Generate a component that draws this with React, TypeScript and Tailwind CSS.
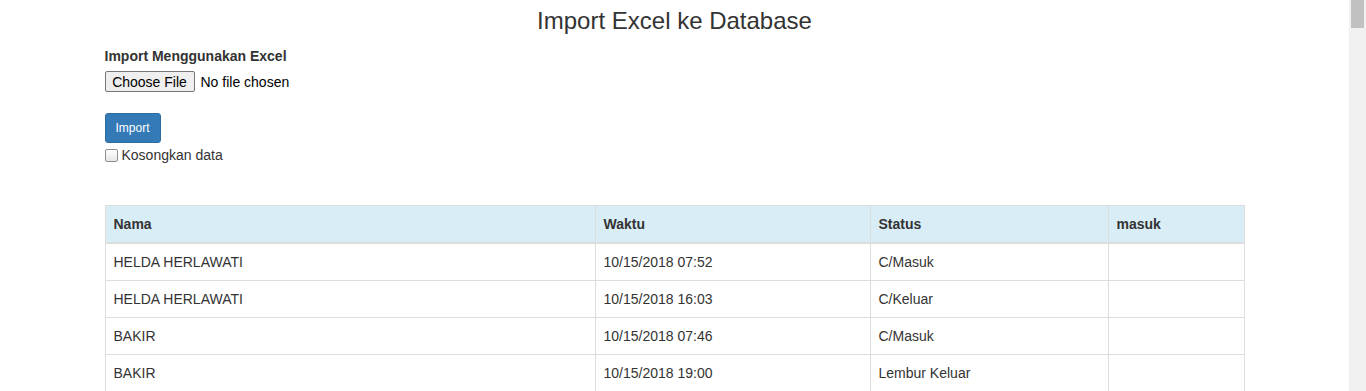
import React from "react";

const rows: [string, string, string, string][] = [
  ["HELDA HERLAWATI", "10/15/2018 07:52", "C/Masuk", ""],
  ["HELDA HERLAWATI", "10/15/2018 16:03", "C/Keluar", ""],
  ["BAKIR", "10/15/2018 07:46", "C/Masuk", ""],
  ["BAKIR", "10/15/2018 19:00", "Lembur Keluar", ""],
];

export default function App() {
  return (
    <div
      className="flex h-[391px] w-[1366px] overflow-hidden bg-white text-[14px] leading-[20px] text-[#333]"
      style={{ fontFamily: '"Liberation Sans", Arial, sans-serif' }}
    >
      <div className="flex-1 overflow-hidden">
        <div className="mx-auto w-[1170px] px-[15px]">
          <h3 className="mt-[8px] text-center text-[24px] leading-[26.4px] font-normal">
            Import Excel ke Database
          </h3>
          <div className="mt-[12px] font-bold">Import Menggunakan Excel</div>
          <div className="mt-[5px] flex h-[21px] items-center">
            <span className="flex h-[21px] w-[90px] items-center justify-center rounded-[2px] border border-[#767676] bg-[#efefef] text-[14px] text-black">
              Choose File
            </span>
            <span className="ml-[6px] text-black">No file chosen</span>
          </div>
          <div className="mt-[21px]">
            <span className="inline-flex h-[30px] w-[56px] items-center justify-center rounded-[3px] border border-[#2e6da4] bg-[#337ab7] text-[12px] leading-[18px] text-white">
              Import
            </span>
          </div>
          <div className="mt-[2px] flex h-[20px] items-center">
            <span className="mr-[4px] h-[13px] w-[13px] rounded-[2px] border border-[#8f8f8f] bg-gradient-to-b from-white to-[#e6e6e6]" />
            <span>Kosongkan data</span>
          </div>
          <table className="mt-[40px] w-[1139px] table-fixed border-collapse border border-[#ddd]">
            <colgroup>
              <col className="w-[490px]" />
              <col className="w-[275px]" />
              <col className="w-[238px]" />
              <col className="w-[136px]" />
            </colgroup>
            <thead>
              <tr className="bg-[#d9edf7]">
                <th className="border border-b-2 border-[#ddd] p-[8px] text-left font-bold">Nama</th>
                <th className="border border-b-2 border-[#ddd] p-[8px] text-left font-bold">Waktu</th>
                <th className="border border-b-2 border-[#ddd] p-[8px] text-left font-bold">Status</th>
                <th className="border border-b-2 border-[#ddd] p-[8px] text-left font-bold">masuk</th>
              </tr>
            </thead>
            <tbody>
              {rows.map((r, i) => (
                <tr key={i}>
                  {r.map((c, j) => (
                    <td key={j} className="h-[37px] border border-[#ddd] p-[8px]">
                      {c}
                    </td>
                  ))}
                </tr>
              ))}
            </tbody>
          </table>
        </div>
      </div>
      <div className="flex h-full w-[17px] flex-col bg-[#f1f1f1] px-[2px]">
        <div className="h-[28px] w-full bg-[#c1c1c1]" />
      </div>
    </div>
  );
}
